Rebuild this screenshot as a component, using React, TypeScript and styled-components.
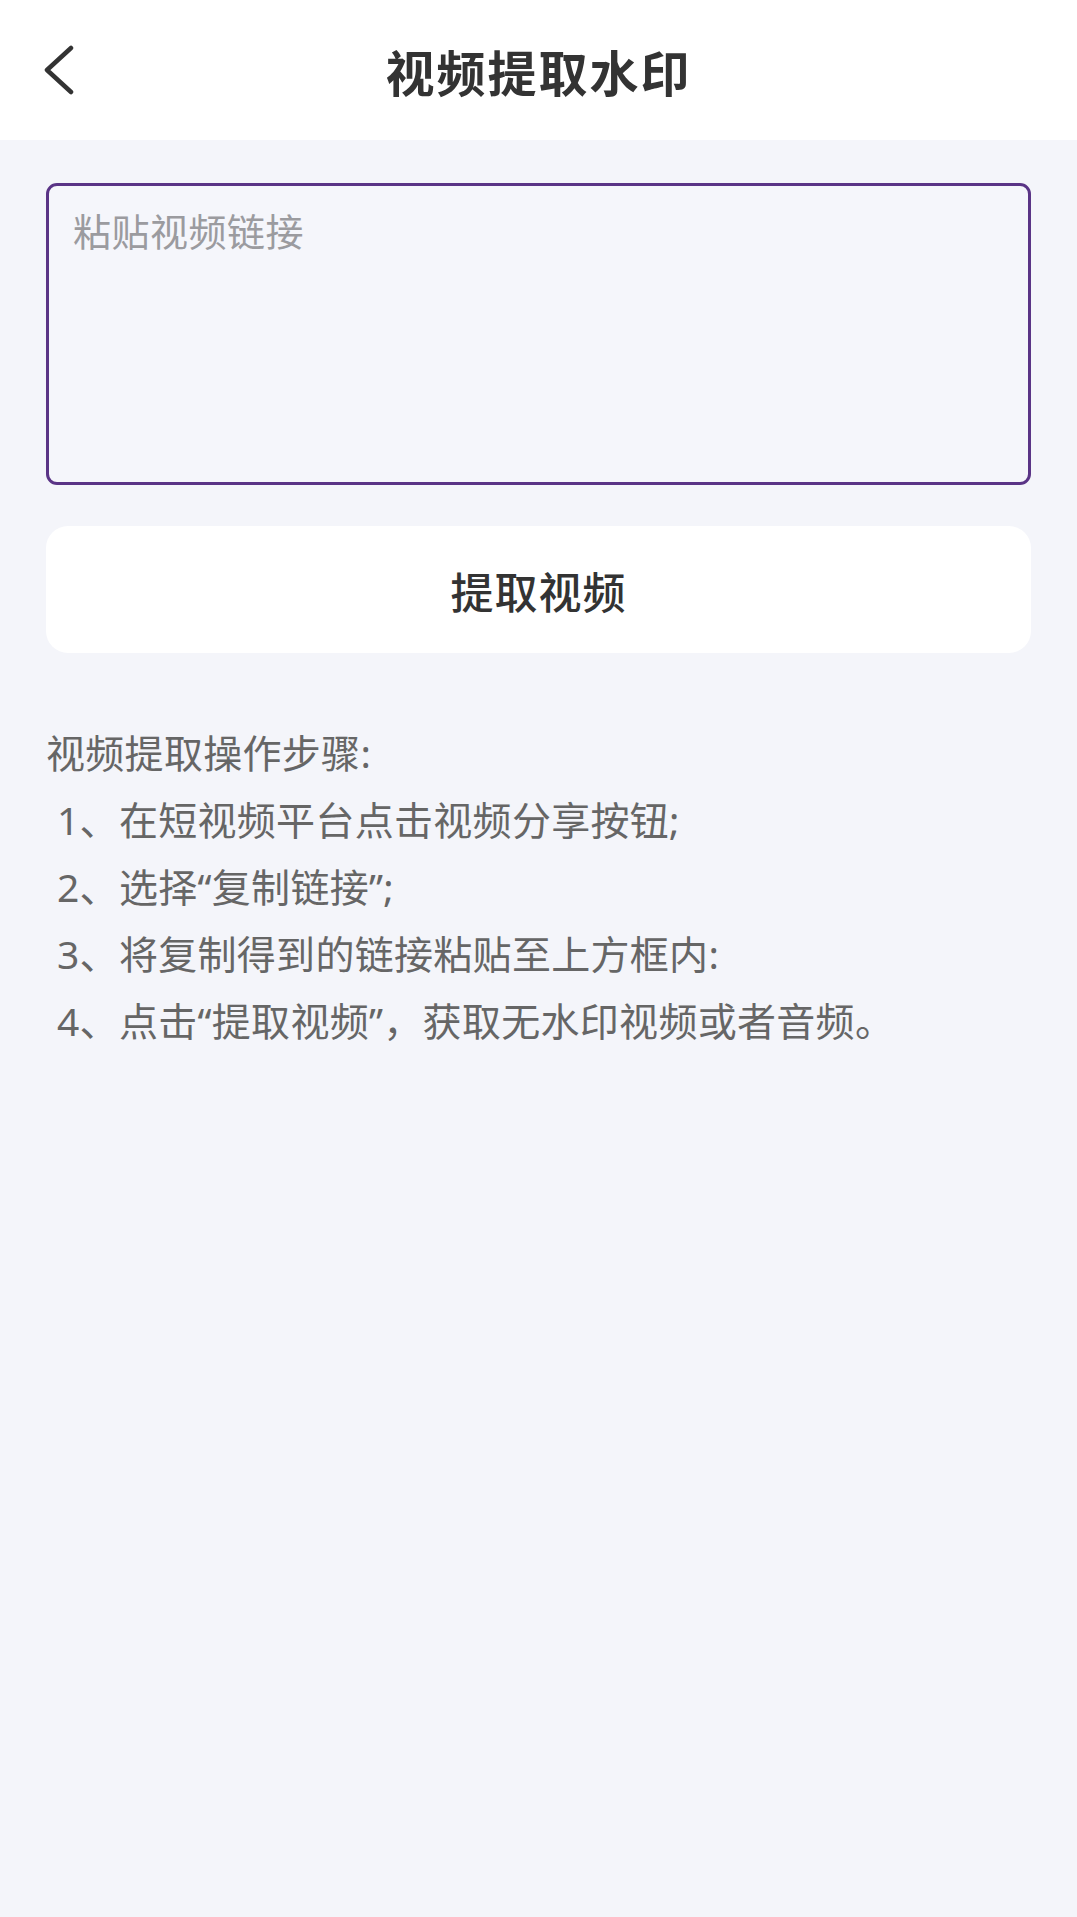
import { createGlobalStyle, styled } from "styled-components";

const GlobalStyle = createGlobalStyle`
  html, body {
    margin: 0;
    padding: 0;
    background: #f4f5fa;
    font-family: "Noto Sans CJK SC", "Noto Sans", sans-serif;
  }
  * {
    box-sizing: border-box;
  }
`;

const steps = [
  "1、在短视频平台点击视频分享按钮;",
  "2、选择“复制链接”;",
  "3、将复制得到的链接粘贴至上方框内:",
  "4、点击“提取视频”，获取无水印视频或者音频。",
];

const App = () => {
  return (
    <Page>
      <GlobalStyle />
      <Header>
        <BackButton aria-label="返回">
          <svg width="32" height="50" viewBox="0 0 32 50" fill="none">
            <path
              d="M28 3 L4 25 L28 47"
              stroke="#333"
              strokeWidth="4.5"
              strokeLinecap="round"
              strokeLinejoin="round"
            />
          </svg>
        </BackButton>
        <Title>视频提取水印</Title>
      </Header>

      <Content>
        <LinkInput placeholder="粘贴视频链接" />
        <ExtractButton>提取视频</ExtractButton>

        <Steps>
          <StepsTitle>视频提取操作步骤:</StepsTitle>
          {steps.map((s) => (
            <StepItem key={s}>{s}</StepItem>
          ))}
        </Steps>
      </Content>
    </Page>
  );
};
export default App;

const Page = styled.div`
  min-height: 1917px;
  background: #f4f5fa;
`;

const Header = styled.header`
  position: relative;
  height: 140px;
  background: #ffffff;
  display: flex;
  align-items: center;
  justify-content: center;
`;

const BackButton = styled.button`
  position: absolute;
  left: 43px;
  top: 45px;
  padding: 0;
  border: none;
  background: none;
  display: flex;
`;

const Title = styled.h1`
  margin: 0;
  font-size: 49px;
  font-weight: 700;
  color: #333;
  letter-spacing: 2px;
`;

const Content = styled.main`
  padding: 43px 46px 0;
  display: flex;
  flex-direction: column;
`;

const LinkInput = styled.textarea`
  display: block;
  width: 100%;
  height: 302px;
  margin: 0;
  padding: 17px 24px;
  border: 3px solid #5a3486;
  border-radius: 11px;
  background: #f5f6fb;
  font-family: inherit;
  font-size: 38px;
  line-height: 1.4;
  letter-spacing: 0.5px;
  color: #333;
  resize: none;
  outline: none;

  &::placeholder {
    color: #9b9b9f;
  }
`;

const ExtractButton = styled.button`
  margin-top: 41px;
  height: 127px;
  border: none;
  border-radius: 22px;
  background: #ffffff;
  font-family: inherit;
  font-size: 43px;
  font-weight: 500;
  letter-spacing: 1px;
  color: #333;
`;

const Steps = styled.section`
  margin-top: 66px;
  display: flex;
  flex-direction: column;
  font-family: "Noto Sans", "Noto Sans CJK SC", sans-serif;
  font-size: 39px;
  line-height: 67px;
  letter-spacing: 0.3px;
  color: #666;
`;

const StepsTitle = styled.div``;

const StepItem = styled.div`
  padding-left: 11px;
`;
